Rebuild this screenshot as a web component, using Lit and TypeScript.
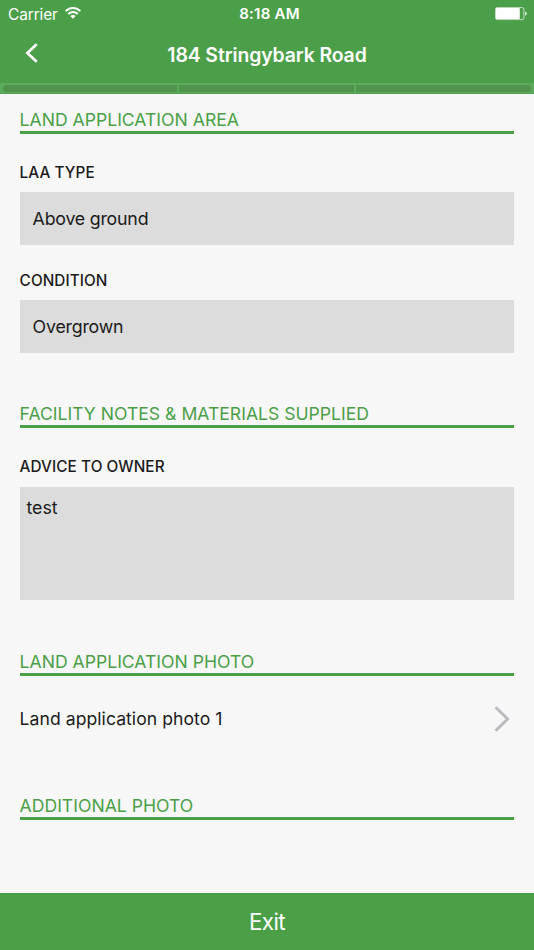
import { LitElement, html, css } from "lit";
import { customElement, property } from "lit/decorators.js";

@customElement("status-bar")
class StatusBar extends LitElement {
  static styles = css`
    :host { display: grid; grid-template-columns: 1fr auto 1fr; align-items: center; height: 28px; padding: 0 7px 0 8px; color: #fff; font-size: 15.5px; line-height: 28px; }
    .left { display: flex; align-items: center; gap: 7.5px; letter-spacing: -0.15px; }
    .left span { line-height: 26px; padding-top: 2px; }
    .left svg { margin-top: -2px; }
    .time { font-weight: 600; font-size: 15px; letter-spacing: 0.25px; padding-left: 4px; }
    .battery { justify-self: end; display: block; }
    svg { display: block; }
  `;
  render() {
    return html`
      <div class="left"><span>Carrier</span>
        <svg width="16" height="12" viewBox="0 0 16 12" fill="none" stroke="#fff" stroke-width="2">
          <path d="M0.7 4.1C4.9 0 11.1 0 15.3 4.1" /><path d="M3.3 7C6 4.3 10 4.3 12.7 7" />
          <path d="M8 11.8 5.3 9.1C6.8 7.6 9.2 7.6 10.7 9.1Z" fill="#fff" stroke="none" />
        </svg>
      </div>
      <span class="time">8:18 AM</span>
      <svg class="battery" width="32" height="14" viewBox="0 0 32 14">
        <rect x="0.5" y="0.6" width="28.4" height="12" rx="1.6" fill="none" stroke="#fff" stroke-opacity=".65" />
        <rect x="1" y="1.1" width="23.8" height="11" rx=".8" fill="#fff" />
        <path d="M30.2 4.4C32.2 5.2 32.2 8 30.2 8.8Z" fill="#fff" />
      </svg>`;
  }
}

@customElement("section-title")
class SectionTitle extends LitElement {
  static styles = css`
    :host { display: block; height: 24px; line-height: 26px; border-bottom: 3px solid #4a9f47; color: #4a9f47; font-size: 17.6px; font-weight: 400; white-space: nowrap; }
  `;
  render() { return html`<slot></slot>`; }
}

@customElement("form-field")
class FormField extends LitElement {
  @property() label = "";
  @property() value = "";
  @property({ type: Boolean }) multiline = false;
  static styles = css`
    :host { display: block; }
    .label { height: 20px; line-height: 22px; margin-bottom: 10px; font-size: 15.3px; font-weight: 480; letter-spacing: 0.08px; }
    .value { box-sizing: border-box; height: 53px; padding: 0 13px; line-height: 53px; background: #dcdcdc; font-size: 17.8px; letter-spacing: -0.22px; }
    :host([multiline]) .label { margin-bottom: 11px; }
    :host([multiline]) .value { height: 113px; padding: 9px 6.8px; line-height: 24px; letter-spacing: 0; }
  `;
  render() {
    return html`<div class="label">${this.label}</div><div class="value">${this.value}</div>`;
  }
}

@customElement("app-root")
class AppRoot extends LitElement {
  static styles = css`
    :host { display: flex; flex-direction: column; height: 950px; overflow: hidden; background: #f7f7f7; color: #1b1b1b; font-family: Inter, "Liberation Sans", sans-serif; }
    header { background: #4c9f49; color: #fff; }
    .nav { display: grid; grid-template-columns: 64px 1fr 64px; align-items: center; height: 55px; }
    .back { display: block; margin-left: 24px; margin-top: -5px; }
    h1 { margin: 0; text-align: center; font-size: 19.4px; line-height: 55px; font-weight: 600; letter-spacing: -0.1px; }
    .progress { box-sizing: border-box; display: grid; grid-template-columns: 174px 175px 1fr; gap: 2px; height: 11px; padding: 2px 3px; background: #5aac5a; border-bottom: 1px solid #51a04f; }
    .step { height: 7px; background: #4f934d; }
    .step:first-child { border-radius: 3.5px 0 0 3.5px; }
    .step:last-child { border-radius: 0 3.5px 3.5px 0; }
    main { flex: 1; padding: 13px 19.6px 0; }
    .type { margin-top: 28px; }
    .condition { margin-top: 25px; }
    .notes { margin-top: 48px; }
    .advice { margin-top: 28px; }
    .photo { margin-top: 49px; }
    .row { display: flex; align-items: center; justify-content: space-between; height: 52px; margin-top: 17px; padding-right: 4.8px; font-size: 17.6px; letter-spacing: 0.04px; }
    .row span { line-height: 24px; }
    .additional { margin-top: 48px; }
    footer { height: 57px; background: #4a9f47; color: #fff; text-align: center; font-size: 22.4px; line-height: 58px; letter-spacing: -0.6px; }
  `;
  render() {
    return html`
      <header>
        <status-bar></status-bar>
        <div class="nav">
          <svg class="back" width="15" height="20" viewBox="0 0 15 20" fill="none" stroke="#fff" stroke-width="2.7"><path d="M12.7 1.2 3.4 10 12.7 18.8" /></svg>
          <h1>184 Stringybark Road</h1>
        </div>
        <div class="progress"><div class="step"></div><div class="step"></div><div class="step"></div></div>
      </header>
      <main>
        <section-title>LAND APPLICATION AREA</section-title>
        <form-field class="type" label="LAA TYPE" value="Above ground"></form-field>
        <form-field class="condition" label="CONDITION" value="Overgrown"></form-field>
        <section-title class="notes">FACILITY NOTES &amp; MATERIALS SUPPLIED</section-title>
        <form-field class="advice" label="ADVICE TO OWNER" value="test" multiline></form-field>
        <section-title class="photo">LAND APPLICATION PHOTO</section-title>
        <div class="row"><span>Land application photo 1</span>
          <svg width="16" height="26" viewBox="0 0 16 26" fill="none" stroke="#bbbac0" stroke-width="3"><path d="M1.6 1.3 13.6 13 1.6 24.7" /></svg>
        </div>
        <section-title class="additional">ADDITIONAL PHOTO</section-title>
      </main>
      <footer>Exit</footer>`;
  }
}
